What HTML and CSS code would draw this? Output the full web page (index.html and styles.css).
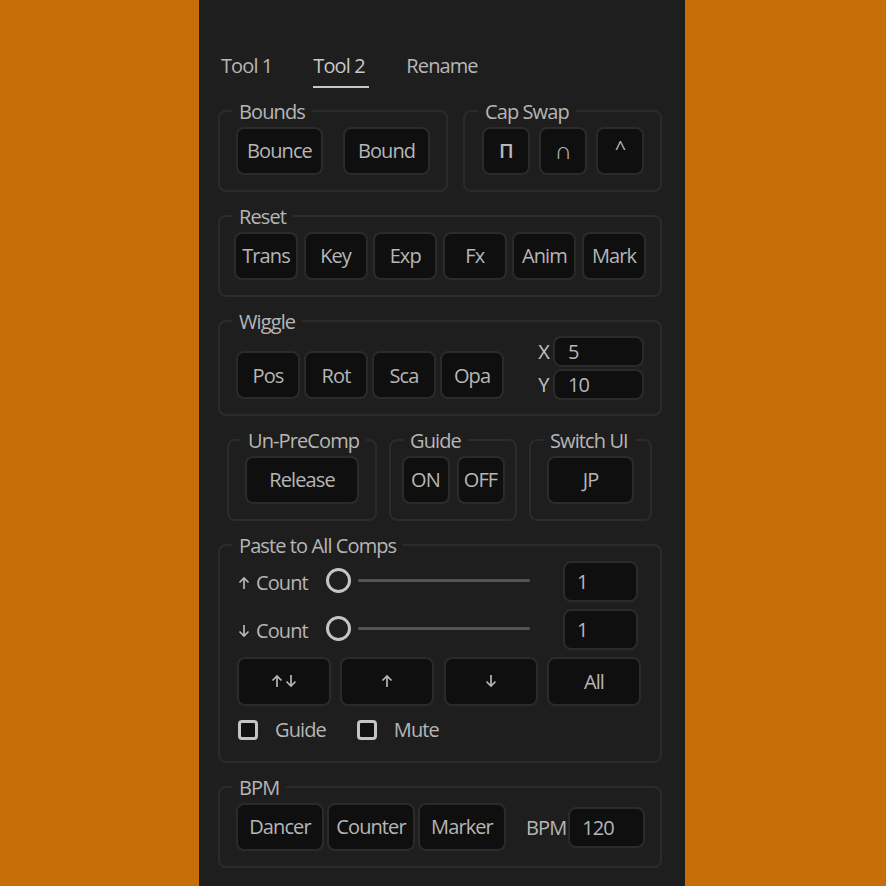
FILE: index.html
```html
<!DOCTYPE html>
<html lang="en">
<head>
  <meta charset="UTF-8" />
  <title>Tool Panel</title>
  <link rel="stylesheet" href="styles.css">
</head>
<body>

<div class="panel">
  <div class="tabs">
    <div class="tab">Tool 1</div>
    <div class="tab active">Tool 2</div>
    <div class="tab">Rename</div>
  </div>

  <div class="row">
    <fieldset class="group bounds">
      <legend>Bounds</legend>
      <div class="btns gap-20">
        <div class="btn w-87">Bounce</div>
        <div class="btn w-87">Bound</div>
      </div>
    </fieldset>
    <fieldset class="group capswap">
      <legend>Cap Swap</legend>
      <div class="btns gap-9">
        <div class="btn w-48 cap-bold">Π</div>
        <div class="btn w-48 cap-large">∩</div>
        <div class="btn w-48 cap-high">^</div>
      </div>
    </fieldset>
  </div>

  <fieldset class="group reset">
    <legend>Reset</legend>
    <div class="btns spread">
      <div class="btn w-64">Trans</div>
      <div class="btn w-64">Key</div>
      <div class="btn w-64">Exp</div>
      <div class="btn w-64">Fx</div>
      <div class="btn w-64">Anim</div>
      <div class="btn w-64">Mark</div>
    </div>
  </fieldset>

  <fieldset class="group wiggle">
    <legend>Wiggle</legend>
    <div class="wiggle-body">
      <div class="btns gap-4">
        <div class="btn w-64">Pos</div>
        <div class="btn w-64">Rot</div>
        <div class="btn w-64">Sca</div>
        <div class="btn w-64">Opa</div>
      </div>
      <div class="xy">
        <div class="xy-row"><span>X</span><div class="field xy-field">5</div></div>
        <div class="xy-row"><span>Y</span><div class="field xy-field">10</div></div>
      </div>
    </div>
  </fieldset>

  <div class="row inset">
    <fieldset class="group small unprecomp">
      <legend>Un-PreComp</legend>
      <div class="btns center"><div class="btn w-114">Release</div></div>
    </fieldset>
    <fieldset class="group small guide">
      <legend>Guide</legend>
      <div class="btns center gap-7">
        <div class="btn w-48">ON</div>
        <div class="btn w-48">OFF</div>
      </div>
    </fieldset>
    <fieldset class="group small switchui">
      <legend>Switch UI</legend>
      <div class="btns center"><div class="btn w-87">JP</div></div>
    </fieldset>
  </div>

  <fieldset class="group paste">
    <legend>Paste to All Comps</legend>
    <div class="count-row">
      <div class="count-label">
        <svg class="arrow" viewBox="0 0 12 14"><path d="M6 13V2M1.5 6.5 6 2l4.5 4.5"/></svg>
        <span>Count</span>
      </div>
      <div class="slider"><div class="knob"></div><div class="track"></div></div>
      <div class="field count-field">1</div>
    </div>
    <div class="count-row">
      <div class="count-label">
        <svg class="arrow" viewBox="0 0 12 14"><path d="M6 1v11M1.5 7.5 6 12l4.5-4.5"/></svg>
        <span>Count</span>
      </div>
      <div class="slider"><div class="knob"></div><div class="track"></div></div>
      <div class="field count-field">1</div>
    </div>
    <div class="btns paste-btns">
      <div class="btn">
        <svg class="arrow" viewBox="0 0 12 14"><path d="M6 13V2M1.5 6.5 6 2l4.5 4.5"/></svg>
        <svg class="arrow" viewBox="0 0 12 14"><path d="M6 1v11M1.5 7.5 6 12l4.5-4.5"/></svg>
      </div>
      <div class="btn"><svg class="arrow" viewBox="0 0 12 14"><path d="M6 13V2M1.5 6.5 6 2l4.5 4.5"/></svg></div>
      <div class="btn"><svg class="arrow" viewBox="0 0 12 14"><path d="M6 1v11M1.5 7.5 6 12l4.5-4.5"/></svg></div>
      <div class="btn">All</div>
    </div>
    <div class="checks">
      <div class="check"><div class="box"></div><span>Guide</span></div>
      <div class="check"><div class="box"></div><span>Mute</span></div>
    </div>
  </fieldset>

  <fieldset class="group bpm">
    <legend>BPM</legend>
    <div class="bpm-body">
      <div class="btns gap-3">
        <div class="btn w-88">Dancer</div>
        <div class="btn w-88">Counter</div>
        <div class="btn w-88">Marker</div>
      </div>
      <span class="bpm-label">BPM</span>
      <div class="field bpm-field">120</div>
    </div>
  </fieldset>
</div>

</body>
</html>
```

FILE: styles.css
```css
* { box-sizing: border-box; }
body {
  margin: 0;
  height: 886px;
  overflow: hidden;
  background: #c66f09;
  font-family: "Open Sans", "Noto Sans", sans-serif;
  font-size: 20px;
  font-weight: 500;
  letter-spacing: -0.9px;
  color: #b6b6b6;
}
.panel {
  width: 486px;
  height: 886px;
  margin-left: 199px;
  padding: 48px 23px 0 19px;
  background: #1e1e1e;
  display: flex;
  flex-direction: column;
  gap: 12px;
}
.tabs { display: flex; height: 40px; margin-bottom: -1px; padding-left: 3px; }
.tab { padding-top: 4px; margin-right: 41px; line-height: 27px; height: 40px; }
.tab.active { color: #c8c8c8; border-bottom: 2px solid #c8c8c8; width: 56px; margin-right: 37px; }

.row { display: flex; justify-content: space-between; }
.row.inset { padding: 0 10px 0 9px; }

.group {
  margin: 0;
  padding: 4px 16px 0;
  min-width: 0;
  border: 2px solid #2b2b2b;
  border-radius: 8px;
}
.group legend {
  margin-left: -4px;
  padding: 2px 7px 0;
  line-height: 22px;
  color: #b6b6b6;
}
.group.small legend { margin-left: 12px; }
.bounds { width: 230px; height: 93px; }
.capswap { width: 199px; height: 93px; padding-left: 17px; padding-right: 15px; }
.reset { height: 93px; padding-left: 14px; padding-right: 14px; }
.reset legend { margin-left: -2px; }
.wiggle { height: 107px; padding-top: 3px; }
.small { height: 93px; padding-left: 0; padding-right: 0; }
.unprecomp { width: 150px; }
.guide { width: 128px; }
.switchui { width: 123px; }
.paste { height: 230px; padding-left: 17px; padding-right: 18px; }
.paste legend { margin-left: -5px; }
.bpm { height: 93px; padding-right: 14px; }

.btns { display: flex; }
.center { justify-content: center; }
.spread { justify-content: space-between; }
.gap-20 { gap: 20px; }
.gap-9 { gap: 9px; }
.gap-7 { gap: 7px; }
.gap-4 { gap: 4px; }
.gap-3 { gap: 3px; }

.btn {
  height: 48px;
  padding-bottom: 1px;
  display: flex;
  align-items: center;
  justify-content: center;
  background: #0f0f0f;
  border: 2px solid #2b2b2b;
  border-radius: 8px;
}
.w-48 { width: 48px; }
.w-64 { width: 64px; }
.w-87 { width: 87px; }
.w-88 { width: 88px; }
.w-114 { width: 114px; }

.cap-bold { font-weight: 600; }
.cap-large { font-size: 24px; padding-bottom: 4px; }
.cap-high { padding-bottom: 8px; }

.field {
  flex-shrink: 0;
  display: flex;
  align-items: center;
  background: #0f0f0f;
  border: 2px solid #2b2b2b;
  border-radius: 8px;
  color: #b0b6bc;
}

.wiggle-body { display: flex; justify-content: space-between; }
.wiggle-body .btns { margin-top: 15px; }
.wiggle-body .btn { padding-bottom: 0; }
.xy { display: flex; flex-direction: column; gap: 2px; }
.xy-row { display: flex; align-items: center; gap: 3px; height: 31px; }
.xy-row span { width: 13px; text-align: center; color: #c4c4c4; }
.xy-field { width: 91px; height: 31px; padding-left: 13px; }

.count-row { display: flex; align-items: center; height: 41px; margin-bottom: 7px; }
.count-label { display: flex; align-items: center; gap: 6px; width: 89px; padding-left: 1px; padding-top: 2px; }
.arrow { width: 12px; height: 14px; fill: none; stroke: #b6b6b6; stroke-width: 1.7; }
.slider { display: flex; align-items: center; gap: 7px; width: 204px; margin-bottom: 2px; }
.knob {
  width: 25px;
  height: 25px;
  border: 3px solid #c4c4c4;
  border-radius: 50%;
}
.track { width: 172px; height: 3px; background: #555; border-radius: 2px; }
.count-field { width: 75px; height: 41px; margin-left: 33px; padding-left: 12px; }

.paste-btns { gap: 9.33px; }
.paste-btns .btn { width: 94px; height: 49px; }
.paste-btns .btn .arrow + .arrow { margin-left: 2px; }

.checks { display: flex; margin-top: 10px; padding-left: 1px; }
.check { display: flex; align-items: center; gap: 17px; }
.check + .check { margin-left: 31px; }
.box {
  width: 20px;
  height: 20px;
  background: #111;
  border: 3px solid #c4c4c4;
  border-radius: 4px;
}

.bpm-body { display: flex; align-items: center; }
.bpm-label { margin-left: 20px; }
.bpm-field { width: 77px; height: 41px; margin-left: 2px; padding-left: 12px; }
```
